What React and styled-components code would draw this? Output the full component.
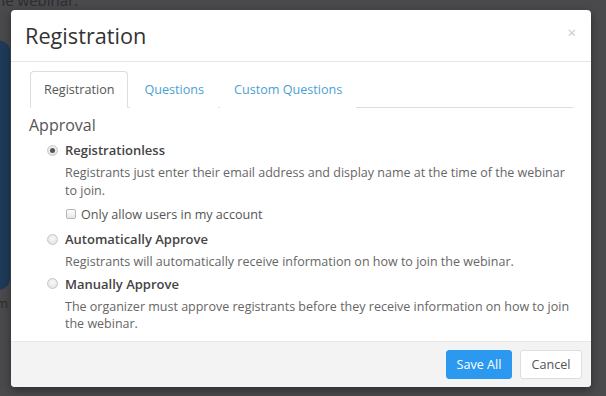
import React from "react";
import styled, { createGlobalStyle } from "styled-components";

const Global = createGlobalStyle`
  html, body { margin: 0; padding: 0; background: #4a494b; }
  body { font-family: "Open Sans", "Noto Sans", sans-serif; }
  * { box-sizing: border-box; }
`;

const Page = styled.div`
  position: relative;
  width: 606px;
  height: 396px;
  overflow: hidden;
  background: #4a494b;
  padding: 10px 15px 9px 11px;
`;

const BehindText = styled.div`
  position: absolute;
  left: -4px;
  top: -10px;
  font-size: 15px;
  color: #2c2c2e;
`;

const BehindStrip = styled.div`
  position: absolute;
  left: -20px;
  top: 40px;
  width: 30px;
  height: 250px;
  border-radius: 12px;
  background: #1e3a58;
`;

const BehindLetter = styled.div`
  position: absolute;
  left: -4px;
  top: 294px;
  font-size: 13px;
  color: #2c2c2e;
`;

const Modal = styled.div`
  position: relative;
  width: 580px;
  height: 377px;
  background: #fff;
  border-radius: 4px;
  box-shadow: 0 3px 10px rgba(0, 0, 0, 0.4);
  display: flex;
  flex-direction: column;
  overflow: hidden;
`;

const Header = styled.div`
  height: 52px;
  padding: 0 14px;
  display: flex;
  align-items: center;
  justify-content: space-between;
  border-bottom: 1px solid #e5e5e5;
`;

const Title = styled.h1`
  margin: 0;
  font-size: 21.7px;
  font-weight: 400;
  color: #333;
`;

const Close = styled.span`
  font-size: 15px;
  color: #c8c8c8;
  margin: -6px 1px 0 0;
  line-height: 1;
`;

const Body = styled.div`
  flex: 1;
  padding: 9px 18px 0 19px;
`;

const TabNav = styled.div`
  display: flex;
  height: 37px;
  border-bottom: 1px solid #dddddd;
`;

const Tab = styled.div`
  height: 37px;
  padding: 0 13px;
  margin-right: 2px;
  display: flex;
  align-items: center;
  font-size: 12.6px;
  color: ${(p) => (p.$active ? "#555" : "#4b9fd2")};
  border: 1px solid ${(p) => (p.$active ? "#dddddd" : "transparent")};
  border-bottom-color: ${(p) => (p.$active ? "#fff" : "transparent")};
  border-radius: 4px 4px 0 0;
  background: #fff;
`;

const Section = styled.div`
  font-size: 16px;
  color: #555;
  margin: 6px 0 0 -1px;
  line-height: 22px;
`;

const Options = styled.div`
  padding-left: 17px;
  margin-top: 3px;
`;

const OptionRow = styled.div`
  display: flex;
  align-items: center;
  height: 22px;
`;

const Radio = styled.span`
  width: 11px;
  height: 11px;
  border-radius: 50%;
  border: 1px solid #c8c8c8;
  background: radial-gradient(circle at 50% 40%, #fafafa, #dcdcdc);
  margin-right: 7px;
  display: flex;
  align-items: center;
  justify-content: center;
  &::after {
    content: "";
    width: 5px;
    height: 5px;
    border-radius: 50%;
    background: ${(p) => (p.$checked ? "#555" : "transparent")};
  }
`;

const Label = styled.span`
  font-size: 13px;
  font-weight: 600;
  color: #444;
`;

const Desc = styled.div`
  font-size: 12.5px;
  line-height: 17.5px;
  color: #666;
  margin-left: 18px;
  padding-top: 3px;
  max-width: 507px;
  margin-bottom: 2px;
`;

const CheckRow = styled.label`
  display: flex;
  align-items: center;
  margin: 7px 0 6px 19px;
  height: 16px;
  font-size: 12.6px;
  color: #555;
`;

const Box = styled.span`
  width: 10px;
  height: 10px;
  border: 1px solid #b5b5b5;
  border-radius: 2px;
  background: linear-gradient(#fff, #e6e6e6);
  margin-right: 5px;
`;

const Footer = styled.div`
  height: 46px;
  background: #f3f3f4;
  border-top: 1px solid #e8e8e8;
  display: flex;
  align-items: center;
  justify-content: flex-end;
  gap: 8px;
  padding: 0 9px 0 0;
`;

const Button = styled.button`
  height: 29px;
  width: ${(p) => (p.$primary ? "66px" : "62px")};
  padding: 0;
  font-family: inherit;
  font-size: 12.6px;
  border-radius: 3px;
  border: 1px solid ${(p) => (p.$primary ? "#2c99f0" : "#dedede")};
  background: ${(p) => (p.$primary ? "#2c99f0" : "#fff")};
  color: ${(p) => (p.$primary ? "#fff" : "#555")};
`;

export default function App() {
  return (
    <>
      <Global />
      <Page>
        <BehindText>he webinar.</BehindText>
        <BehindStrip />
        <BehindLetter>m</BehindLetter>
        <Modal>
          <Header>
            <Title>Registration</Title>
            <Close>×</Close>
          </Header>
          <Body>
            <TabNav>
              <Tab $active>Registration</Tab>
              <Tab>Questions</Tab>
              <Tab>Custom Questions</Tab>
            </TabNav>
            <Section>Approval</Section>
            <Options>
              <OptionRow>
                <Radio $checked />
                <Label>Registrationless</Label>
              </OptionRow>
              <Desc>
                Registrants just enter their email address and display name at the time of the webinar to join.
              </Desc>
              <CheckRow>
                <Box />
                Only allow users in my account
              </CheckRow>
              <OptionRow>
                <Radio />
                <Label>Automatically Approve</Label>
              </OptionRow>
              <Desc>Registrants will automatically receive information on how to join the webinar.</Desc>
              <OptionRow>
                <Radio />
                <Label>Manually Approve</Label>
              </OptionRow>
              <Desc>
                The organizer must approve registrants before they receive information on how to join the webinar.
              </Desc>
            </Options>
          </Body>
          <Footer>
            <Button $primary>Save All</Button>
            <Button>Cancel</Button>
          </Footer>
        </Modal>
      </Page>
    </>
  );
}
